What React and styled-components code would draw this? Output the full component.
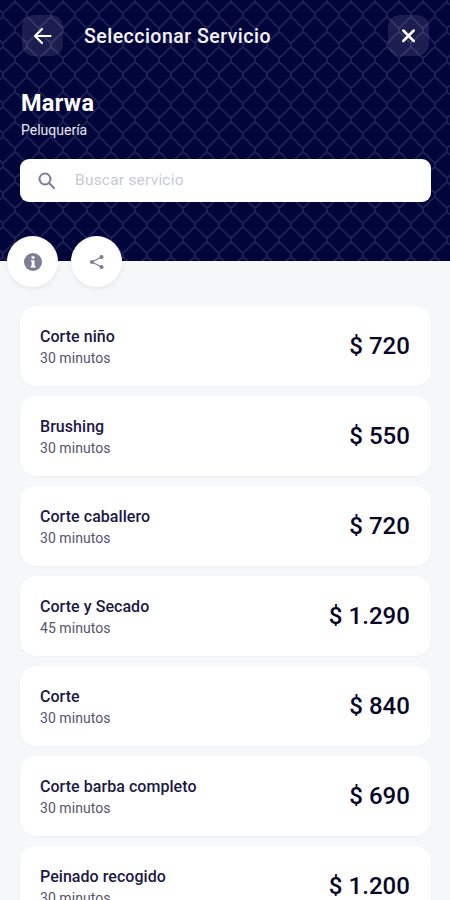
import React from "react";
import styled, { createGlobalStyle } from "styled-components";

const GlobalStyle = createGlobalStyle`
  * { box-sizing: border-box; }
  html, body { margin: 0; padding: 0; }
  body { background: #f5f7f9; font-family: Roboto, "Liberation Sans", sans-serif; color: #0a0835; }
`;

const Screen = styled.main`
  width: 450px;
  height: 900px;
  overflow: hidden;
  background: #f5f7f9;
`;

const Header = styled.header`
  position: relative;
  height: 261px;
  background: #02053a;
  color: #fff;
`;

const Trellis = styled.svg`
  position: absolute;
  inset: 0;
  width: 100%;
  height: 100%;
`;

const HeaderContent = styled.div`
  position: relative;
  padding: 15px 19px 0 20px;
`;

const TopBar = styled.div`
  display: flex;
  align-items: center;
  padding: 0 2px;
`;

const SquareButton = styled.button`
  display: grid;
  place-items: center;
  width: 41px;
  height: 41px;
  padding: 0;
  border: 0;
  border-radius: 12px;
  background: rgba(255, 255, 255, 0.1);
  color: #fff;
`;

const Title = styled.h1`
  flex: 1;
  margin: 2px 0 0 21px;
  font-size: 19.5px;
  line-height: 24px;
  font-weight: 500;
  letter-spacing: 0.48px;
  color: #f4f4fa;
`;

const ShopName = styled.h2`
  margin: 33px 0 0 1px;
  font-size: 23.5px;
  line-height: 28px;
  font-weight: 700;
  letter-spacing: 0.3px;
`;

const ShopKind = styled.p`
  margin: 5px 0 0 1px;
  font-size: 14px;
  line-height: 16px;
  color: #e8e8f2;
`;

const SearchBox = styled.label`
  display: flex;
  align-items: center;
  gap: 19px;
  height: 43px;
  margin-top: 21px;
  padding-left: 18px;
  border-radius: 9px;
  background: #fff;
  color: #7c7e94;
`;

const SearchInput = styled.input`
  flex: 1;
  border: 0;
  padding: 0 0 2px;
  outline: 0;
  background: transparent;
  font: 400 15.5px/20px Roboto, sans-serif;
  letter-spacing: 0.22px;
  &::placeholder { color: #c8c9d3; opacity: 1; }
`;

const Actions = styled.div`
  position: relative;
  display: flex;
  gap: 13px;
  height: 51px;
  margin-top: -25px;
  padding-left: 7px;
`;

const RoundButton = styled.button`
  display: grid;
  place-items: center;
  width: 51px;
  height: 51px;
  padding: 0;
  border: 0;
  border-radius: 50%;
  background: #fff;
  color: #7c7e94;
  box-shadow: 0 2px 5px rgba(10, 8, 53, 0.07);
`;

const ServiceList = styled.ul`
  display: flex;
  flex-direction: column;
  gap: 10px;
  margin: 0;
  padding: 19px 19px 0 20px;
  list-style: none;
`;

const ServiceCard = styled.li`
  display: flex;
  flex: none;
  align-items: center;
  justify-content: space-between;
  height: 80px;
  padding: 2px 21px 0 20px;
  border-radius: 16px;
  background: #fff;
  box-shadow: 0 1px 3px rgba(10, 8, 53, 0.035);
`;

const ServiceName = styled.div`
  font-size: 16px;
  line-height: 20px;
  font-weight: 500;
  letter-spacing: 0.05px;
  color: #1b1844;
`;

const Duration = styled.div`
  margin-top: 1px;
  font-size: 14px;
  line-height: 20px;
  letter-spacing: 0.05px;
  color: #55536d;
`;

const Price = styled.div`
  margin-bottom: 2px;
  font-size: 24px;
  line-height: 28px;
  font-weight: 500;
  letter-spacing: 0.05px;
  color: #080629;
`;

const services = [
  ["Corte niño", 30, "720"],
  ["Brushing", 30, "550"],
  ["Corte caballero", 30, "720"],
  ["Corte y Secado", 45, "1.290"],
  ["Corte", 30, "840"],
  ["Corte barba completo", 30, "690"],
  ["Peinado recogido", 30, "1.200"],
];

function TrellisPattern() {
  return (
    <Trellis aria-hidden="true">
      <defs>
        <pattern id="trellis" x="3" y="0" width="24" height="30" patternUnits="userSpaceOnUse">
          <g fill="none" stroke="#1f2356" strokeWidth="1.7">
            <path d="M0 13.700V16.300C0.300 18 2 18.500 3.200 19.500L8.800 25.500C10 26.500 11.700 27 12 28.700V30" />
            <path d="M24 13.700V16.300C23.700 18 22 18.500 20.800 19.500L15.200 25.500C14 26.500 12.300 27 12 28.700" />
            <path d="M0 13.700C0.300 12 2 11.500 3.200 10.500L8.800 4.500C10 3.500 11.700 3 12 1.300V0" />
            <path d="M24 13.700C23.700 12 22 11.500 20.800 10.500L15.200 4.500C14 3.500 12.300 3 12 1.300" />
          </g>
        </pattern>
      </defs>
      <rect width="100%" height="100%" fill="url(#trellis)" />
    </Trellis>
  );
}

const BackIcon = () => (
  <svg width="20" height="18" viewBox="0 0 20 18" fill="none" stroke="currentColor" strokeWidth="2.2" strokeLinecap="round" strokeLinejoin="round">
    <path d="M9 2L2 9L9 16M2 9H17.500" />
  </svg>
);

const CloseIcon = () => (
  <svg width="16" height="16" viewBox="0 0 16 16" fill="none" stroke="currentColor" strokeWidth="2.5" strokeLinecap="round">
    <path d="M2.300 2.500L12.700 13M12.700 2.500L2.300 13" />
  </svg>
);

const SearchIcon = () => (
  <svg width="18" height="18" viewBox="0 0 18 18" fill="none" stroke="currentColor" strokeWidth="2">
    <circle cx="7" cy="7" r="5.500" />
    <path d="M11 11L16.700 16.700" />
  </svg>
);

const InfoIcon = () => (
  <svg width="18" height="18" viewBox="0 0 18 18">
    <circle cx="9" cy="9" r="9" fill="currentColor" />
    <rect x="7.500" y="3.200" width="3" height="2.600" rx=".6" fill="#fff" />
    <path d="M7 7.200H10.500V12.800H11.500V14.500H6.800V12.800H7.700V8.800H7Z" fill="#fff" />
  </svg>
);

const ShareIcon = () => (
  <svg width="16" height="16" viewBox="0 0 16 16" fill="currentColor">
    <path d="M12.500 3L3 8L12.500 13" fill="none" stroke="currentColor" strokeWidth="1.200" />
    <circle cx="12.500" cy="3" r="2.100" />
    <circle cx="3" cy="8" r="2.100" />
    <circle cx="12.500" cy="13" r="2.100" />
  </svg>
);

export default function App() {
  return (
    <Screen>
      <GlobalStyle />
      <Header>
        <TrellisPattern />
        <HeaderContent>
          <TopBar>
            <SquareButton aria-label="Volver"><BackIcon /></SquareButton>
            <Title>Seleccionar Servicio</Title>
            <SquareButton aria-label="Cerrar"><CloseIcon /></SquareButton>
          </TopBar>
          <ShopName>Marwa</ShopName>
          <ShopKind>Peluquería</ShopKind>
          <SearchBox>
            <SearchIcon />
            <SearchInput placeholder="Buscar servicio" />
          </SearchBox>
        </HeaderContent>
      </Header>
      <Actions>
        <RoundButton aria-label="Información"><InfoIcon /></RoundButton>
        <RoundButton aria-label="Compartir"><ShareIcon /></RoundButton>
      </Actions>
      <ServiceList>
        {services.map(([name, minutes, price]) => (
          <ServiceCard key={name}>
            <div>
              <ServiceName>{name}</ServiceName>
              <Duration>{minutes} minutos</Duration>
            </div>
            <Price>$ {price}</Price>
          </ServiceCard>
        ))}
      </ServiceList>
    </Screen>
  );
}
